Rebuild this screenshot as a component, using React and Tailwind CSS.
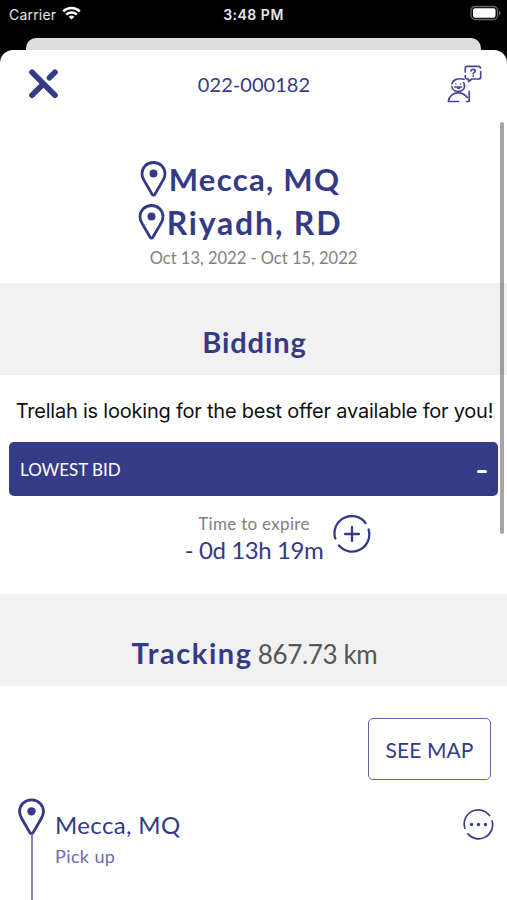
function StatusBar() {
  return (
    <div className="h-[38px] flex items-start justify-between pl-[9px] pr-[6px] text-[#e8e8e8] font-['Inter','Liberation_Sans',sans-serif]">
      <div className="w-[150px] h-7 flex items-center">
        <span className="text-[14px] tracking-[0.2px]">Carrier</span>
        <svg className="ml-[6px] -mt-[2px] w-[19px] h-[14px]" viewBox="0 0 19 14" fill="none" stroke="white" strokeWidth="2.4">
          <path d="M1.2 5.3a12 12 0 0 1 16.6 0" />
          <path d="M4.2 8.6a7.7 7.7 0 0 1 10.6 0" />
          <path d="M9.5 13.6 6.7 10.8a4 4 0 0 1 5.6 0z" fill="white" stroke="none" />
        </svg>
      </div>
      <span className="h-7 flex items-center mr-[3px] text-[14px] font-semibold tracking-[0.5px]">3:48 PM</span>
      <div className="w-[150px] h-7 flex items-center justify-end">
        <svg className="w-[31px] h-[16px] -mt-[2px]" viewBox="0 0 31 16">
          <rect x="1" y="1.5" width="26.5" height="13" rx="4" fill="none" stroke="#666" strokeWidth="1.3" />
          <rect x="3" y="3.3" width="22.5" height="9.4" rx="2" fill="white" />
          <path d="M29 5.6c1.8.8 1.8 4 0 4.8z" fill="#777" />
        </svg>
      </div>
    </div>
  );
}

function Pin({ className }) {
  return (
    <svg className={className} viewBox="0 0 26 36" fill="none">
      <path
        d="M13 1.5C6.4 1.5 1.5 6.5 1.5 12.7c0 2.600.9 4.800 2.200 6.900L11.600 33.300c.7 1.200 2.100 1.200 2.800 0l7.900-13.700c1.300-2.100 2.200-4.300 2.200-6.900C24.500 6.500 19.600 1.500 13 1.500z"
        stroke="#343a86"
        strokeWidth="2.8"
      />
      <circle cx="13" cy="12.5" r="4" fill="#343a86" />
    </svg>
  );
}

// broken ring used behind the plus and the dots
function Ring({ className, strokeWidth, children }) {
  return (
    <svg className={className} viewBox="0 0 38 38" fill="none" stroke="#343a86" strokeWidth={strokeWidth} strokeLinecap="round">
      <path d="M2.3 23.5A17.2 17.2 0 0 1 32.5 8" />
      <path d="M35.6 14.5A17.2 17.2 0 0 1 6 30.5" />
      {children}
    </svg>
  );
}

function SupportIcon() {
  return (
    <svg className="w-[36px] h-[40px]" viewBox="0 0 36 40" fill="none" stroke="#45489a" strokeWidth="1.7" strokeLinecap="round" strokeLinejoin="round">
      <path d="M18.3 8V4A1.7 1.7 0 0 1 20 2.300H31.500a2 2 0 0 1 2 1.700M33.700 7.500V13a2 2 0 0 1-2 2H25l-3.500 2.500V15H20a1.700 1.700 0 0 1-1.700-1.500V11.500" />
      <path d="M24 6.8c.3-2 4.300-2 4.300.2 0 1.500-2.100 1.300-2.100 2.800M26.200 11.900v.2" />
      <path d="M5 19.6C6.200 15.500 11 13.800 16.800 15.300" />
      <path d="M4.900 22.500c.6 6.800 12.400 6.600 12.700-.5 0-1.400-.4-2.500-1-3.400" />
      <path d="M8.8 20h.1M13.6 20h.1" strokeWidth="1.5" />
      <path d="M7.600 23h7M10.500 24.200h2" strokeWidth="1.5" />
      <path d="M11.5 37.500H1.400c.5-5.500 5-8.600 9.800-8.600 4 0 7 1.800 9 4.600M22.200 27.500v10h-2.700" />
    </svg>
  );
}

function SectionBand({ title, titleClass, children }) {
  return (
    <div className="h-[92px] bg-[#f1f1f1] flex items-center justify-center pt-[26px] pl-[2px] gap-[5px]">
      <h2 className={`text-[29px] leading-[36px] font-bold ${titleClass}`}>{title}</h2>
      {children}
    </div>
  );
}

export default function App() {
  return (
    <div className="relative w-[507px] h-[900px] overflow-hidden bg-black font-['Lato','Open_Sans',sans-serif] text-[#343a86]">
      <StatusBar />
      <div className="mx-[26px] h-[12px] bg-[#dedede] rounded-t-[10px]" />
      <div className="h-[850px] bg-white rounded-t-[13px] overflow-hidden">
        <header className="h-[68px] flex items-center justify-between pl-[29px] pr-[24px]">
          <svg className="w-[32px] h-[30px]" viewBox="0 0 32 30" fill="none" stroke="#343a86" strokeWidth="5.6" strokeLinecap="round">
            <path d="M3 3.3 26 26.3M3 26.3 14.5 14.8M20.5 8.7 26 3.3" />
          </svg>
          <span className="text-[20px] tracking-[0.05px]">022-000182</span>
          <SupportIcon />
        </header>

        <div className="h-[165px] pt-[40px] flex flex-col items-center">
          <div className="h-[43px] flex items-center mr-[27px]">
            <Pin className="w-[27px] h-[36px] -mt-px" />
            <span className="text-[31px] font-bold ml-[2px] tracking-[1.3px]">Mecca, MQ</span>
          </div>
          <div className="h-[43px] flex items-center mr-[27px]">
            <Pin className="w-[27px] h-[36px] -mt-px" />
            <span className="text-[32px] font-bold ml-[2px] tracking-[1.8px]">Riyadh, RD</span>
          </div>
          <p className="text-[16.5px] leading-[28px] text-[#808080]">Oct 13, 2022 - Oct 15, 2022</p>
        </div>

        <SectionBand title="Bidding" titleClass="tracking-[0.9px]" />

        <p className="h-[67px] pt-[5px] pl-[2px] flex items-center justify-center whitespace-nowrap text-[20px] tracking-[-0.22px] text-[#111] font-['Inter','Liberation_Sans',sans-serif]">
          Trellah is looking for the best offer available for you!
        </p>

        <div className="h-[54px] mx-[9px] pl-[11px] pr-[11px] bg-[#363b87] rounded-[5px] flex items-center justify-between text-white">
          <span className="text-[17px] pt-px">LOWEST BID</span>
          <span className="w-[10px] h-[3px] mt-[4px] bg-white rounded-sm" />
        </div>

        <div className="h-[98px] pt-[14px] pl-[185px] flex">
          <div className="w-[138px] flex flex-col items-center">
            <p className="text-[17px] leading-[28px] text-[#808080] tracking-[0.3px] whitespace-nowrap">Time to expire</p>
            <p className="text-[24px] leading-[24px] tracking-[-0.4px] whitespace-nowrap">- 0d 13h 19m</p>
          </div>
          <Ring className="w-[38px] h-[38px] ml-[10px] mt-[5px]" strokeWidth="2.3">
            <path d="M19 12v14M12 19h14" />
          </Ring>
        </div>

        <SectionBand title="Tracking" titleClass="tracking-[1.6px]">
          <span className="pt-[2px] text-[26px] leading-[36px] text-[#555] tracking-[-0.35px]">867.73 km</span>
        </SectionBand>

        <div className="pt-[32px] pr-[16px] flex justify-end">
          <button className="w-[123px] h-[62px] pt-[2px] rounded-[5px] border-[1.5px] border-[#6265a8] text-[21px] tracking-[0.1px]">SEE MAP</button>
        </div>

        <div className="pt-[18px] pl-[18px] pr-[13px] flex items-start">
          <div className="w-[27px] flex flex-col items-center">
            <Pin className="w-[27px] h-[38px]" />
            <div className="w-[2px] h-[70px] -mt-[2px] bg-[#8582b2]" />
          </div>
          <div className="ml-[10px] pt-[12px]">
            <p className="text-[24px] leading-[30px] tracking-[0.35px]">Mecca, MQ</p>
            <p className="text-[18px] leading-[32px] tracking-[0.4px] text-[#6b6da8]">Pick up</p>
          </div>
          <Ring className="w-[31px] h-[31px] ml-auto mt-[11px]" strokeWidth="2">
            <g fill="#343a86" stroke="none">
              <circle cx="10.5" cy="19" r="2" />
              <circle cx="19" cy="19" r="2" />
              <circle cx="27.5" cy="19" r="2" />
            </g>
          </Ring>
        </div>
      </div>
      {/* scroll indicator */}
      <div className="absolute right-[3px] top-[122px] w-[4px] h-[412px] rounded-full bg-black/35" />
    </div>
  );
}
